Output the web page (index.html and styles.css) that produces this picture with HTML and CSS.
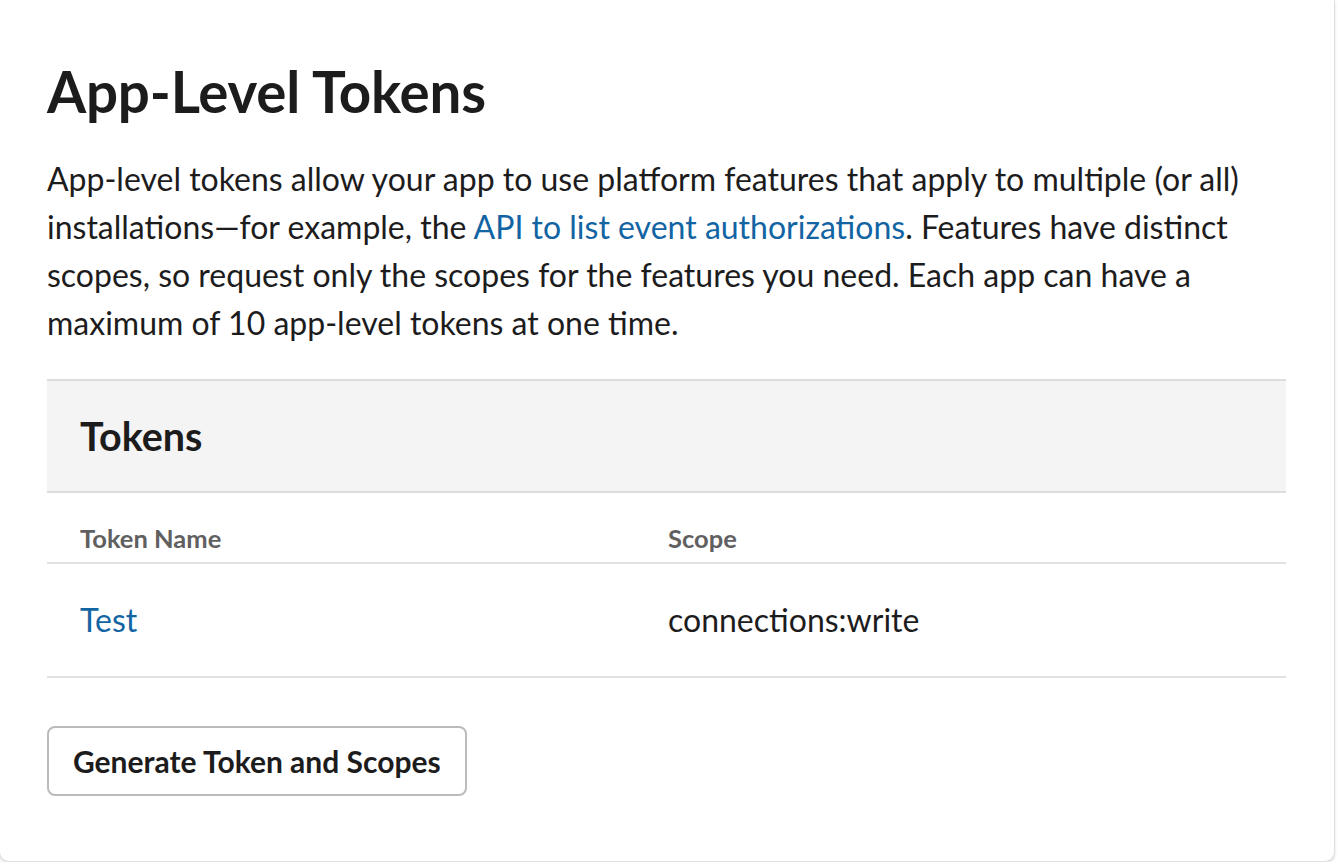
FILE: index.html
```html
<!DOCTYPE html>
<html lang="en">
<head>
<meta charset="utf-8">
<title>App-Level Tokens</title>
<link rel="stylesheet" href="styles.css">
</head>
<body>
<div class="card">
  <h1 class="title">App-Level Tokens</h1>
  <p class="intro">App-level tokens allow your app to use platform features that apply to multiple (or all) installations—for example, the <a href="#" class="link">API to list event authorizations</a>. Features have distinct scopes, so request only the scopes for the features you need. Each app can have a maximum of 10 app-level tokens at one time.</p>
  <section class="tokens">
    <div class="tokens-head"><h2 class="tokens-title">Tokens</h2></div>
    <div class="row row-head">
      <div class="cell">Token Name</div>
      <div class="cell">Scope</div>
    </div>
    <div class="row row-body">
      <div class="cell"><a href="#" class="link">Test</a></div>
      <div class="cell">connections:write</div>
    </div>
  </section>
  <button class="btn">Generate Token and Scopes</button>
</div>
</body>
</html>
```

FILE: styles.css
```css
html, body {
  margin: 0;
  padding: 0;
  background: #ffffff;
}
body {
  font-family: Lato, "Noto Sans", sans-serif;
  color: #1d1c1d;
}
.card {
  box-sizing: border-box;
  width: 1336px;
  margin-left: -1px;
  padding: 58px 48px 65px 47px;
  background: #fff;
  border: 1px solid #e0e0e0;
  border-top: none;
  border-radius: 0 0 10px 10px;
  box-shadow: 0 2px 3px rgba(0, 0, 0, 0.12);
}
.title {
  margin: 0;
  font-size: 56.5px;
  line-height: 67px;
  font-weight: 700;
  letter-spacing: -0.2px;
}
.intro {
  margin: 30px 0 0;
  font-size: 32px;
  line-height: 48px;
  font-weight: 400;
}
.link {
  color: #1264a3;
  text-decoration: none;
}
.tokens {
  margin-top: 32px;
}
.tokens-head {
  background: #f4f4f4;
  border-top: 2px solid #dddddd;
  border-bottom: 2px solid #dddddd;
  height: 110px;
  display: flex;
  align-items: center;
  padding: 0 33px;
}
.tokens-title {
  margin: 0;
  font-size: 39.5px;
  font-weight: 700;
  line-height: 46px;
}
.row {
  display: grid;
  grid-template-columns: 588px 1fr;
  border-bottom: 2px solid #e2e2e2;
}
.cell {
  padding: 0 33px;
}
.row-head {
  height: 69px;
  align-items: end;
  font-size: 25.5px;
  font-weight: 700;
  color: #616061;
  line-height: 30px;
}
.row-head .cell {
  padding-bottom: 9px;
}
.row-body {
  height: 112px;
  align-items: center;
  font-size: 32px;
  line-height: 38px;
}
.btn {
  margin-top: 48px;
  box-sizing: border-box;
  height: 70px;
  padding: 0 24px;
  background: #fff;
  border: 2px solid #bbbbbb;
  border-radius: 8px;
  font-family: Lato, "Noto Sans", sans-serif;
  font-size: 30px;
  font-weight: 700;
  color: #1d1c1d;
  display: block;
}
```
